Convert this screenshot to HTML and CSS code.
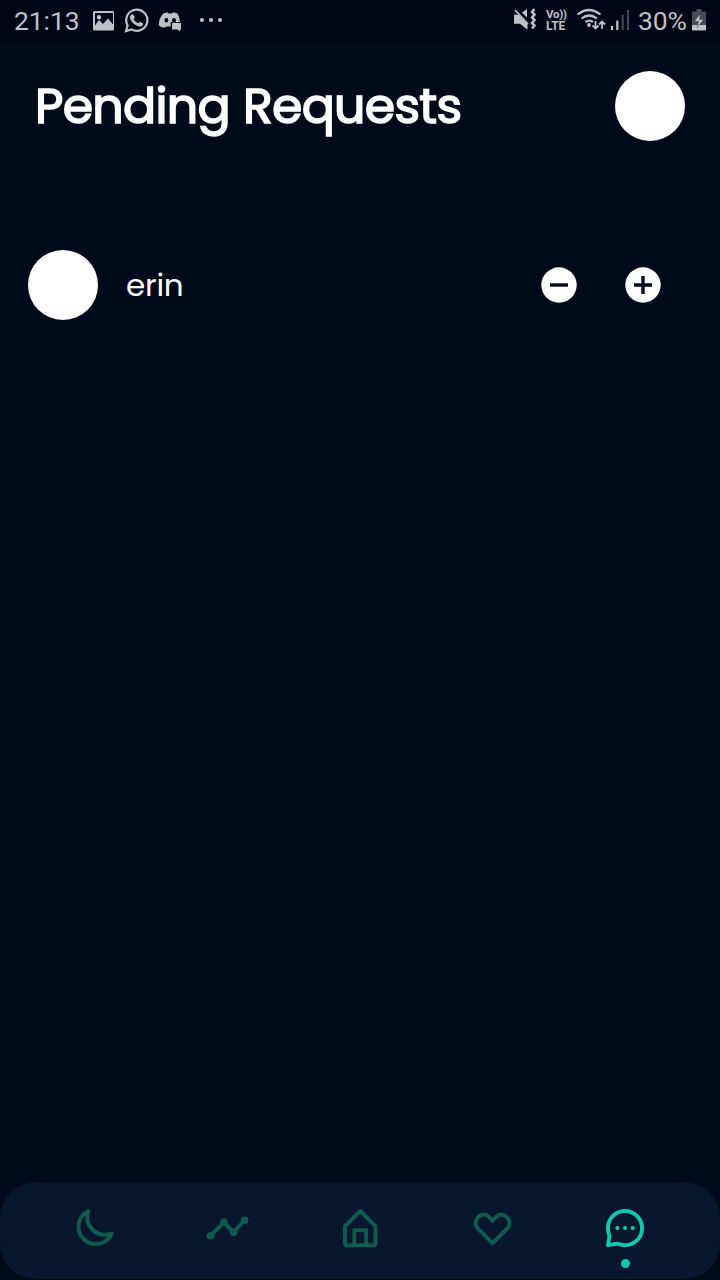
FILE: index.html
```
<!DOCTYPE html>
<html lang="en">
<head>
<meta charset="utf-8">
<title>Pending Requests</title>
<link rel="stylesheet" href="styles.css">
</head>
<body>
<div class="screen">
  <div class="status">
    <span class="clock">21:13</span>
    <svg class="status-left" width="136" height="42" viewBox="90 0 136 42" fill="currentColor">
      <path fill-rule="evenodd" d="M94.500 11h18q1.500 0 1.500 1.500v16.500q0 1.500-1.500 1.500h-18q-1.500 0-1.500-1.500v-16.500q0-1.500 1.500-1.500zM95 25.500l4-5.500 4 4 5-5.500 5 6v-11.500h-18zM96.800 17.200a2.200 2.200 0 1 0 4.400 0a2.200 2.200 0 1 0-4.400 0"/>
      <path d="M126 31.200l1.600-5.800a10.600 10.600 0 1 1 4 4z" fill="none" stroke="currentColor" stroke-width="2.200"/>
      <path d="M131.500 14.500q1-.8 2 .3l1.400 2.700-1.300 1.800q1.600 2.800 4.600 4l1.700-1.600 3 1.600q.7.500-.3 2-1.500 2-4.500 1-5.600-2-7.800-7.200-1.200-3 1.200-4.600z"/>
      <path fill-rule="evenodd" d="M163.500 13.200l4-1 1 1.300h3.600l1-1.300 4 1q2.600 3.500 3 8.800h-9.400v4.400h-4l-2.600 1.400q-3-.3-5.300-2.300-.4-7 4.700-12.300zM164.400 20.300a2 2.200 0 1 0 4 0a2 2.200 0 1 0-4 0zM172 20.300a2 2.200 0 0 0 4 0a2 2.200 0 0 0-4 0"/>
      <path d="M172 23h9v6.500h-1v2l-2.500-2h-5.500z"/>
      <circle cx="202" cy="20" r="2.100"/><circle cx="211" cy="20" r="2.100"/><circle cx="220" cy="20" r="2.100"/>
    </svg>
    <div class="status-right">
      <svg width="28" height="42" viewBox="511 0 28 42" fill="currentColor">
        <path d="M514 14.800h4.500l9 9v6l-7.500-6h-6zM522 12.500l5-3.500v8.500z"/>
        <path d="M515 10l13 14" stroke="currentColor" stroke-width="1.800"/>
        <path d="M534.500 9l-2.500 3 2.500 2.500-2.500 3 2.500 2.500-2.500 3 2.500 2.500-2.500 3" fill="none" stroke="currentColor" stroke-width="2.500"/>
      </svg>
      <div class="volte"><span class="vo">Vo))</span><span>LTE</span></div>
      <svg width="56" height="42" viewBox="576 0 56 42" fill="none" stroke="currentColor" stroke-width="2.200">
        <path d="M577.500 14.500q11.500-9 23 0M581.500 18.500q7.700-6 15.500 0M585.500 22q3.700-2.800 7.500 0"/>
        <circle cx="589" cy="25" r="1.900" fill="currentColor" stroke="none"/>
        <path d="M595.500 21v7.500M592.500 25.500l3 3 3-3M602 29v-7.500M599 24.500l3-3 3 3" stroke-width="1.800"/>
        <path d="M612 26v4M617.300 20.500v9.500"/>
        <path d="M622.700 15v15M628 10v20" opacity=".35"/>
      </svg>
      <span class="percent">30%</span>
      <svg class="battery" width="14" height="42" viewBox="692 0 14 42" fill="currentColor">
        <path d="M696.500 9h5v2.500h4.500v14h-14v-14h4.500z" opacity=".38"/>
        <path d="M692 25h14v4.500q0 1-1 1h-12q-1 0-1-1z"/>
        <path d="M700.300 13.500l-6 8h4l-1 6 6.500-8h-4.300z" stroke="#000515" stroke-width=".3"/>
      </svg>
    </div>
  </div>
  <header class="header">
    <h1 class="title"><span>Pending</span><span>Requests</span></h1>
    <div class="avatar"></div>
  </header>
  <main class="list">
    <div class="request">
      <div class="avatar"></div>
      <span class="name">erin</span>
      <div class="actions">
        <svg width="36" height="36" viewBox="0 0 36 36"><circle cx="18" cy="18" r="17.700" fill="#fff"/><path d="M9 18h18" class="sign"/></svg>
        <svg width="36" height="36" viewBox="0 0 36 36"><circle cx="18" cy="18" r="17.700" fill="#fff"/><path d="M9 18h18M18 9v18" class="sign"/></svg>
      </div>
    </div>
  </main>
  <nav class="nav">
    <div class="tab"><svg class="icon" viewBox="0 0 44 44"><path d="M15.100 5.200A17.300 17.300 0 1 0 38.700 27.500C31.300 30 24.300 28.500 19.300 23.500C14.300 18.500 12.800 12 15.100 5.200z"/></svg></div>
    <div class="tab"><svg class="icon" viewBox="0 0 44 44"><path d="M4.500 29.700L17.900 16.300L27.500 26.300L38.500 14.300"/><g fill="currentColor" stroke="none"><circle cx="4.500" cy="29.700" r="3.800"/><circle cx="17.900" cy="16.300" r="3.800"/><circle cx="27.500" cy="26.300" r="3.800"/><circle cx="38.500" cy="14.300" r="3.800"/></g></svg></div>
    <div class="tab"><svg class="icon" viewBox="0 0 44 44"><path d="M22.200 5L7 20.200V37.500Q7 39.300 8.800 39.300H35.600Q37.400 39.300 37.400 37.500V20.200zM16.300 39V24.200H28.200V39"/></svg></div>
    <div class="tab"><svg class="icon" viewBox="0 0 44 44"><path d="M21.500 37.200L7.600 23.300C1.100 16.500 6.600 8.700 13.100 8.700C17.100 8.700 18.600 11.700 21.500 14.700C24.400 11.700 25.900 8.700 29.900 8.700C36.400 8.700 41.900 16.500 35.400 23.300z"/></svg></div>
    <div class="tab active"><svg class="icon" viewBox="0 0 44 44"><path d="M4.900 39.200L6.500 30.200Q4.900 26 4.900 22A17.100 17.100 0 1 1 22 39.200Q17.700 39.200 14.200 37.600z"/><g fill="currentColor" stroke="none"><circle cx="14.400" cy="22.100" r="2.100"/><circle cx="22" cy="22.100" r="2.100"/><circle cx="29.600" cy="22.100" r="2.100"/></g></svg><span class="dot"></span></div>
  </nav>
</div>
</body>
</html>
```
FILE: styles.css
```
* { box-sizing: border-box; }
body { margin: 0; background: #000a1b; }
.screen {
  width: 720px;
  height: 1280px;
  display: flex;
  flex-direction: column;
  padding-bottom: 1px;
  background: #000a1b;
  color: #fff;
  font-family: Poppins, Inter, sans-serif;
}
.status {
  height: 42px;
  display: flex;
  align-items: center;
  padding: 0 14px;
  background: #000615;
  color: #bfc1c6;
  font: 26.5px/42px Roboto, sans-serif;
}
.clock { width: 76px; letter-spacing: -0.1px; }
.status-left { flex: none; }
.status-right { margin-left: auto; display: flex; align-items: center; }
.volte {
  width: 37px;
  padding: 0 0 2px 7px;
  display: flex;
  flex-direction: column;
  font-size: 12px;
  font-weight: 700;
  line-height: 12px;
}
.volte span { height: 12px; }
.volte .vo { letter-spacing: -0.3px; font-size: 11.5px; }
.percent { width: 54px; margin-left: 6px; letter-spacing: -0.2px; }
.header {
  height: 128px;
  display: flex;
  align-items: center;
  justify-content: space-between;
  padding: 0 35px;
}
.title {
  margin: 0;
  padding-bottom: 1px;
  display: flex;
  gap: 13px;
  font-size: 49px;
  font-weight: 400;
  letter-spacing: -0.7px;
  line-height: 60px;
  -webkit-text-stroke: 1.6px #fff;
}
.avatar { width: 70px; height: 70px; flex: none; border-radius: 50%; background: #fff; }
.list { flex: 1; padding: 80px 59px 0 28px; }
.request { display: flex; align-items: center; }
.name { margin-left: 28px; font-size: 31px; letter-spacing: -0.2px; line-height: 48px; }
.actions { margin-left: auto; display: flex; gap: 48px; }
.sign { fill: none; stroke: #000a1b; stroke-width: 3.4; }
.nav {
  height: 97px;
  display: flex;
  padding: 0 28.75px;
  background: #0a162e;
  border-radius: 36px;
}
.tab {
  flex: 1;
  display: flex;
  flex-direction: column;
  align-items: center;
  padding-top: 24px;
  color: #0f5c4e;
}
.tab.active { color: #13c8aa; }
.icon {
  width: 44px;
  height: 44px;
  fill: none;
  stroke: currentColor;
  stroke-width: 3.9;
  stroke-linejoin: round;
  stroke-linecap: round;
}
.dot { width: 9px; height: 9px; margin-top: 9px; border-radius: 50%; background: currentColor; }
```
